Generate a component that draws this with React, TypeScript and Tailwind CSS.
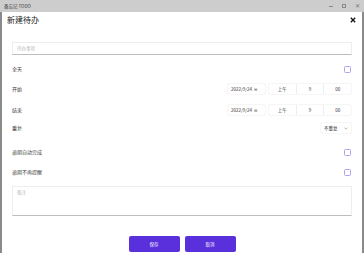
import React from "react";

const font = { fontFamily: '"Noto Sans CJK SC", "Noto Sans", sans-serif' };

function Check() {
  return <div className="w-[7px] h-[7px] rounded-[1.5px] border border-[#aea3f2] bg-white" />;
}

function Row({ label, children, mt }: { label: string; children?: React.ReactNode; mt: string }) {
  return (
    <div className={`flex items-center justify-between h-[10px] pl-[10px] pr-[11px] ${mt}`}>
      <span className="text-[5px] text-[#444]">{label}</span>
      {children}
    </div>
  );
}

function DateTime() {
  return (
    <div className="flex items-center gap-[4px]">
      <div className="flex items-center w-[37px] h-[10px] bg-white shadow-[0_0_1px_rgba(0,0,0,0.35)] rounded-[1px] pl-[3px] text-[4.5px] text-[#333]">
        <span>2022/9/24</span>
        <span className="ml-[2px] text-[4px] text-[#666]">⊞</span>
      </div>
      <div className="flex w-[82px] h-[10px] bg-white shadow-[0_0_1px_rgba(0,0,0,0.35)] rounded-[1px] text-[4.5px] text-[#333]">
        <div className="flex-1 flex items-center justify-center border-r border-[#eee]">上午</div>
        <div className="flex-1 flex items-center justify-center border-r border-[#eee]">9</div>
        <div className="flex-1 flex items-center justify-center">00</div>
      </div>
    </div>
  );
}

export default function App() {
  return (
    <div className="w-[364px] h-[253px] bg-white flex flex-col overflow-hidden" style={font}>
      <div className="h-[12px] bg-[#cdcdcd] flex items-center justify-between pl-[4px] pr-[4px] shrink-0">
        <span className="text-[4.5px] text-[#333]">备忘记 TODO</span>
        <div className="flex items-center gap-[9px] text-[#777]">
          <div className="w-[4px] h-[1px] bg-[#888]" />
          <div className="w-[4px] h-[4px] border border-[#888]" />
          <span className="text-[6px] leading-none">✕</span>
        </div>
      </div>
      <div className="flex-1 flex flex-col border-l-2 border-r-2 border-[#8a8a8a]">
        <div className="h-[13px] mt-[1px] flex items-center justify-between pl-[5px] pr-[6px]">
          <span className="text-[8px] leading-none text-[#222]">新建待办</span>
          <svg width="6" height="6" viewBox="0 0 6 6">
            <path d="M0.8 0.8L5.2 5.2M5.2 0.8L0.8 5.2" stroke="#111" strokeWidth="1.3" />
          </svg>
        </div>
        <div className="mt-[16px] mx-[10px] h-[13px] bg-white border border-[#eee] border-b-[#bdbdbd] rounded-[1px] flex items-center pl-[4px]">
          <span className="text-[4.5px] text-[#bbb]">待办事项</span>
        </div>
        <Row label="全天" mt="mt-[9px]">
          <Check />
        </Row>
        <Row label="开始" mt="mt-[10px]">
          <DateTime />
        </Row>
        <Row label="结束" mt="mt-[11px]">
          <DateTime />
        </Row>
        <Row label="重复" mt="mt-[8px]">
          <div className="flex items-center justify-between w-[30px] h-[10px] bg-white shadow-[0_0_1px_rgba(0,0,0,0.35)] rounded-[1px] px-[3px] text-[4.5px] text-[#333]">
            <span>不重复</span>
            <svg width="4" height="3" viewBox="0 0 4 3">
              <path d="M0.5 0.8L2 2.2L3.5 0.8" stroke="#888" strokeWidth="0.6" fill="none" />
            </svg>
          </div>
        </Row>
        <Row label="逾期自动完成" mt="mt-[14px]">
          <Check />
        </Row>
        <Row label="逾期不再提醒" mt="mt-[10px]">
          <Check />
        </Row>
        <div className="mt-[9px] mx-[10px] h-[30px] bg-white border border-[#eee] border-b-[#bdbdbd] rounded-[1px] pl-[4px] pt-[2px] text-[4.5px] leading-[6px] text-[#bbb]">
          备注
        </div>
        <div className="mt-[20px] flex justify-center gap-[5px]">
          <button className="w-[51px] h-[16px] bg-[#5a2fdc] rounded-[2px] text-white text-[4.5px]">保存</button>
          <button className="w-[51px] h-[16px] bg-[#5a2fdc] rounded-[2px] text-white text-[4.5px]">取消</button>
        </div>
      </div>
    </div>
  );
}
